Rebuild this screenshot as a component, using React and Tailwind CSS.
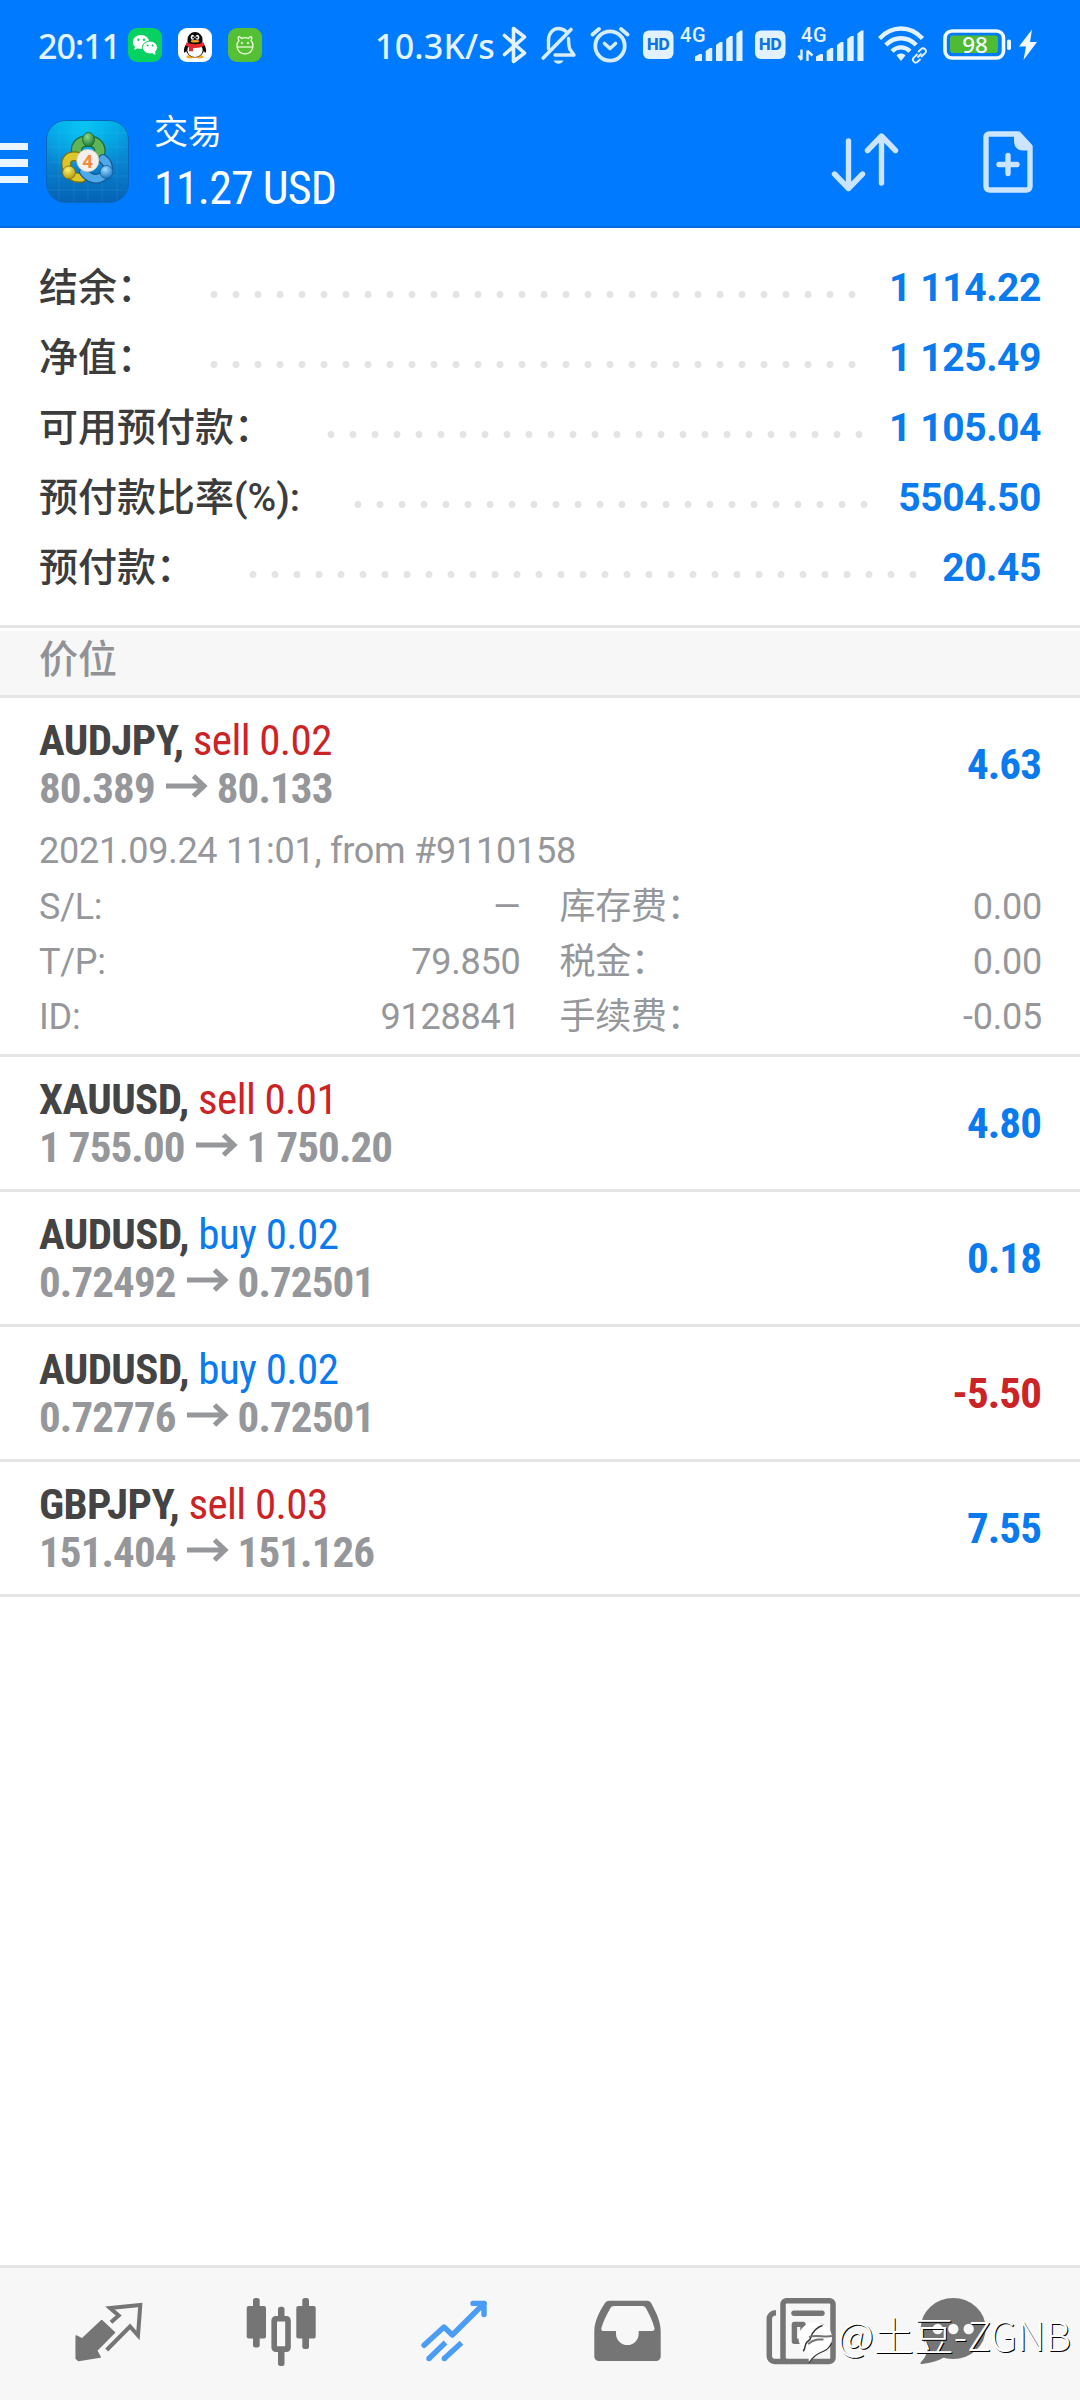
import React from "react";

const account = [
  { label: "结余：", value: "1 114.22", dots: 30 },
  { label: "净值：", value: "1 125.49", dots: 30 },
  { label: "可用预付款：", value: "1 105.04", dots: 25 },
  { label: "预付款比率(%):", value: "5504.50", dots: 24 },
  { label: "预付款：", value: "20.45", dots: 31 },
];

const positions = [
  {
    symbol: "AUDJPY",
    side: "sell",
    lots: "0.02",
    open: "80.389",
    current: "80.133",
    profit: "4.63",
    details: {
      time: "2021.09.24 11:01, from #9110158",
      rows: [
        ["S/L:", "–", "库存费：", "0.00"],
        ["T/P:", "79.850", "税金：", "0.00"],
        ["ID:", "9128841", "手续费：", "-0.05"],
      ],
    },
  },
  { symbol: "XAUUSD", side: "sell", lots: "0.01", open: "1 755.00", current: "1 750.20", profit: "4.80" },
  { symbol: "AUDUSD", side: "buy", lots: "0.02", open: "0.72492", current: "0.72501", profit: "0.18" },
  { symbol: "AUDUSD", side: "buy", lots: "0.02", open: "0.72776", current: "0.72501", profit: "-5.50" },
  { symbol: "GBPJPY", side: "sell", lots: "0.03", open: "151.404", current: "151.126", profit: "7.55" },
];

const WeChatIcon = () => (
  <svg width="34" height="34" viewBox="0 0 34 34">
    <rect width="34" height="34" rx="9" fill="#07d160" />
    <ellipse cx="13" cy="14" rx="8.2" ry="7" fill="#fff" />
    <path d="M7 18l-.8 4 4-2z" fill="#fff" />
    <ellipse cx="22" cy="19.500" rx="7.600" ry="6.500" fill="#fff" stroke="#07d160" strokeWidth="1" />
    <path d="M24 25l3.500 2-.4-3.800z" fill="#fff" />
    <circle cx="10.400" cy="11.800" r="1.200" fill="#07d160" />
    <circle cx="16" cy="11.800" r="1.200" fill="#07d160" />
    <circle cx="19.600" cy="17.600" r="1" fill="#07d160" />
    <circle cx="24.600" cy="17.600" r="1" fill="#07d160" />
  </svg>
);

const QQIcon = () => (
  <svg width="34" height="34" viewBox="0 0 34 34">
    <rect width="34" height="34" rx="9" fill="#fff" />
    <ellipse cx="12.500" cy="28.800" rx="4" ry="1.700" fill="#f5a623" />
    <ellipse cx="21.500" cy="28.800" rx="4" ry="1.700" fill="#f5a623" />
    <path d="M9 15C6.500 18 5.500 21 6 24.500c1 .5 2-1 2.600-2h16.800c.6 1 1.600 2.500 2.600 2 .5-3.500-.5-6.500-3-9.500z" fill="#0a0a0a" />
    <ellipse cx="17" cy="20.500" rx="9.200" ry="9" fill="#0a0a0a" />
    <ellipse cx="17" cy="22.300" rx="7.600" ry="6.800" fill="#fff" />
    <path d="M9.500 14V11.500a7.500 7.500 0 0 1 15 0V14l-3 3h-9z" fill="#0a0a0a" />
    <path d="M8.500 14.200c5 2.600 12 2.600 17 0l1 3.300c-4 2.300-7.500 2.700-11.500 2.400v3.300h-4v-4.200c-1.200-.4-2.200-.9-3-1.400z" fill="#e8262b" />
    <ellipse cx="14.600" cy="9.300" rx="1.900" ry="2.500" fill="#fff" />
    <ellipse cx="19.400" cy="9.300" rx="1.900" ry="2.500" fill="#fff" />
    <circle cx="15.200" cy="9.500" r="1" fill="#000" />
    <circle cx="18.900" cy="9.500" r="1" fill="#000" />
    <ellipse cx="17" cy="13.300" rx="4.300" ry="1.300" fill="#f5a623" />
  </svg>
);

const MonsterIcon = () => (
  <svg width="34" height="34" viewBox="0 0 34 34" fill="none" stroke="#e9ffd9" strokeWidth="1.300">
    <rect width="34" height="34" rx="9" fill="#55bf35" stroke="none" />
    <path d="M11 12.500c-1.500-2.500-.8-4 .6-3.700 1 .2 1.400 1 1.900 1.700 2-1 5-1 7 0 .5-.7.9-1.500 1.900-1.700 1.400-.3 2.100 1.200.6 3.700 2.600 3.200 2.300 7 .6 9.800-1.600 2.500-4 3.500-6.600 3.500s-5-1-6.600-3.500c-1.700-2.800-2-6.600.6-9.800z" />
    <path d="M9.200 19h15.600" />
    <path d="M14 13.800v2.400M20 13.800v2.400M12.800 15h2.400M18.800 15h2.400" strokeWidth="1" />
  </svg>
);

const BluetoothIcon = () => (
  <svg width="26" height="40" viewBox="0 0 26 40" fill="none" stroke="#e3f3ff" strokeWidth="3.600" strokeLinecap="round" strokeLinejoin="round">
    <path d="M2.500 10.500L22.500 28 11.500 36.500V3.500L22.500 12 2.500 29.500" />
  </svg>
);

const MutedBellIcon = () => (
  <svg width="36" height="40" viewBox="0 0 36 40" fill="none" stroke="#d6edff" strokeWidth="3.400" strokeLinecap="round" strokeLinejoin="round">
    <path d="M7.500 24V14.500C8 7.500 12.500 3.500 17.500 3.500c3 0 5.500 1 7.500 3" />
    <path d="M27.500 13.500c.3 5 .2 8 1.300 10.500L33 30H14" />
    <path d="M2.200 33L30 4.500" strokeWidth="3.600" />
    <path d="M12.500 35.500h10c-1.200 2.200-3 3.200-5 3.200s-3.800-1-5-3.200z" fill="#d6edff" stroke="none" />
  </svg>
);

const AlarmIcon = () => (
  <svg width="40" height="40" viewBox="0 0 40 40" fill="none" stroke="#d6edff" strokeWidth="3.800" strokeLinecap="round" strokeLinejoin="round">
    <circle cx="20" cy="21" r="14.700" />
    <path d="M2.500 9.500L9 4M37.500 9.500L31 4" />
    <path d="M14.500 18.500l5.500 5 5.500-5" strokeWidth="3.600" />
  </svg>
);

const HdIcon = () => (
  <svg width="31" height="30" viewBox="0 0 31 30">
    <rect y=".5" width="30.500" height="28.500" rx="6" fill="#e3f2ff" />
    <text x="15.300" y="20.300" textAnchor="middle" fontFamily="Inter, sans-serif" fontWeight="800" fontSize="15.500" fill="#0c74e4">
      HD
    </text>
  </svg>
);

const SignalIcon = ({ traffic }) => (
  <svg className="overflow-visible" width="66" height="38" viewBox="0 0 66 38" fill="#e3f2ff">
    <text x="3" y="15.500" fontFamily="Roboto, sans-serif" fontWeight="500" fontSize="20" letterSpacing="0.600">
      4G
    </text>
    <path d="M18 35v-4.500l4.500-2.500h2.500v7zM28.700 35V25l4-3h2.500v13zM39 35V19l4-3h2.500v19zM49.200 35V13l4-3h2.500v25zM59.400 35V7.500l4-3H65.500V35z" />
    {traffic && (
      <path d="M3.500 23.500v10M9.500 35V24.500M0.500 29.500l3 4.500M9.500 25l5 4.500" fill="none" stroke="#e3f2ff" strokeWidth="2.400" />
    )}
  </svg>
);

const WifiIcon = () => (
  <svg width="51" height="38" viewBox="0 0 51 38" fill="none" stroke="#e3f2ff" strokeWidth="4.400">
    <path d="M1.500 12.500C14-.8 32-.8 44.500 12.500" />
    <path d="M7.800 19c8.800-9 21.600-9 30.400 0" />
    <path d="M14 25.300c5.200-5.200 12.800-5.200 18 0" />
    <path d="M18.500 29.500c2.500-2.600 6.500-2.600 9 0L23 35z" fill="#e3f2ff" stroke="none" />
    <path d="M39.500 28l-3.700 3.700a2.800 2.800 0 0 0 4 4l2.700-2.700M43 31l4-3.800a2.800 2.800 0 0 0-4-4L40 26" strokeWidth="1.900" />
    <path d="M39.500 31.500l4-4" strokeWidth="1.900" />
  </svg>
);

const BatteryIcon = () => (
  <svg width="95" height="32" viewBox="0 0 95 32">
    <rect x="2" y="2" width="58.500" height="27" rx="7" fill="none" stroke="#f2faff" strokeWidth="3.600" />
    <rect x="7" y="6.500" width="48" height="17.500" rx="3" fill="#4dbb33" />
    <rect x="64" y="10.500" width="4" height="10.500" rx="1.800" fill="#f2faff" />
    <text x="32" y="23.600" textAnchor="middle" fontFamily="Noto Sans, sans-serif" fontWeight="500" fontSize="22.500" fill="#f2faff">
      98
    </text>
    <path d="M89 .5L76 17.500h7L80.500 31 94 13h-7z" fill="#f2faff" />
  </svg>
);

const AppLogo = () => (
  <svg width="83" height="83" viewBox="0 0 83 83">
    <defs>
      <linearGradient id="tile" x1="0" y1="0" x2="0" y2="1">
        <stop offset="0" stopColor="#00a4e4" />
        <stop offset="0.500" stopColor="#0a84d0" />
        <stop offset="1" stopColor="#0562b4" />
      </linearGradient>
      <radialGradient id="glow" cx="0.450" cy="0.050" r="0.600">
        <stop offset="0" stopColor="#08c4f4" />
        <stop offset="1" stopColor="#08c4f4" stopOpacity="0" />
      </radialGradient>
      <radialGradient id="green" cx="0.400" cy="0.300" r="0.700">
        <stop offset="0" stopColor="#8fd98a" />
        <stop offset="1" stopColor="#1d7a35" />
      </radialGradient>
      <radialGradient id="yellow" cx="0.400" cy="0.300" r="0.700">
        <stop offset="0" stopColor="#fff27a" />
        <stop offset="1" stopColor="#b39a08" />
      </radialGradient>
      <radialGradient id="azure" cx="0.400" cy="0.300" r="0.700">
        <stop offset="0" stopColor="#a5dcff" />
        <stop offset="1" stopColor="#1678c4" />
      </radialGradient>
    </defs>
    <rect x=".5" y=".5" width="82" height="82" rx="19" fill="url(#tile)" />
    <rect x=".5" y=".5" width="82" height="82" rx="19" fill="url(#glow)" stroke="#0a66bd" />
    <path d="M13 3v77M28 1v81M42 1v81M56 1v81M71 3v77M1 13h81M1 27h81M1 42h81M1 56h81M1 70h81" stroke="#4cc0f0" strokeOpacity="0.160" />
    <g fill="none" strokeLinecap="round">
      <path d="M32 35c-4-8 1-14 10-14s14 6 11 14" stroke="#1c6a36" strokeWidth="11.500" />
      <path d="M32 35c-4-8 1-14 10-14s14 6 11 14" stroke="#5fb457" strokeWidth="9" />
      <path d="M31 36.500c-8-1.500-12 3-10.500 10C22 54 28 59 36 57.500" stroke="#77700c" strokeWidth="10" />
      <path d="M31 36.500c-8-1.500-12 3-10.500 10C22 54 28 59 36 57.500" stroke="#dcc62c" strokeWidth="7.500" />
      <path d="M38 52c5 6.500 12 8.500 18 5S65 45 57 39" stroke="#145a96" strokeWidth="10" />
      <path d="M38 52c5 6.500 12 8.500 18 5S65 45 57 39" stroke="#4fa9e8" strokeWidth="7.500" />
    </g>
    <ellipse cx="42.500" cy="19.500" rx="6" ry="7" fill="url(#green)" stroke="#195f2c" strokeWidth=".8" />
    <circle cx="23" cy="52.500" r="6.500" fill="url(#yellow)" stroke="#776a0a" strokeWidth=".8" />
    <circle cx="60.500" cy="52" r="6.500" fill="url(#azure)" stroke="#0f5795" strokeWidth=".8" />
    <circle cx="41.800" cy="40.500" r="11.200" fill="#f3efec" stroke="#b9b5a8" strokeWidth=".6" />
    <text x="41.800" y="47.500" textAnchor="middle" fontFamily="Roboto, sans-serif" fontWeight="700" fontSize="19" fill="#f58a3c">
      4
    </text>
  </svg>
);

const SortIcon = () => (
  <svg width="70" height="60" viewBox="0 0 70 60" fill="none" stroke="#cbe4ff" strokeWidth="5.400" strokeLinecap="round" strokeLinejoin="round">
    <path d="M18.500 9v46M4.500 42l14 14.500 14-14.500" />
    <path d="M51.500 51V5M37.500 18.500l14-14.500 14 14.500" />
  </svg>
);

const NewOrderIcon = () => (
  <svg width="50" height="62" viewBox="0 0 50 62" fill="none" stroke="#cbe4ff">
    <path d="M6 3h29.500L47 15.500V55.500a3.500 3.500 0 0 1-3.500 3.500H6.500a3.500 3.500 0 0 1-3.500-3.500V6a3 3 0 0 1 3-3z" strokeWidth="5.400" strokeLinejoin="round" />
    <path d="M31 3v7c0 5.500 3 9.500 9 9.500h8v-5L37 3z" fill="#cbe4ff" stroke="none" />
    <path d="M25 24.500v18M16 33.500h18" strokeWidth="5.400" strokeLinecap="round" />
  </svg>
);

const QuotesTab = () => (
  <svg width="72" height="72" viewBox="0 0 72 72">
    <path d="M29.700 24.500L42.500 36.500 24.700 54.500 28.200 61 6.500 64.500 4.200 62.500 4.200 40 10 43z" fill="#757575" stroke="#757575" strokeWidth="1.500" strokeLinejoin="round" />
    <path d="M39 26.300L46.700 19.500 38 12 68.300 9 66 39.500 58 30.500 34.700 54" fill="none" stroke="#757575" strokeWidth="4" />
  </svg>
);

const ChartTab = () => (
  <svg width="72" height="72" viewBox="0 0 72 72" fill="#757575">
    <rect x="1.700" y="10" width="19.300" height="32.500" rx="2" />
    <rect x="8" y="2" width="6.700" height="49.500" rx="2.500" />
    <rect x="33" y="10.700" width="6.500" height="59.300" rx="2.500" />
    <rect x="29.200" y="22.800" width="13.800" height="30.300" rx="1.500" fill="#f7f7f7" stroke="#757575" strokeWidth="5.600" />
    <rect x="51.300" y="10" width="19.400" height="32.500" rx="2" />
    <rect x="57.300" y="2" width="6.700" height="51" rx="2.500" />
  </svg>
);

const TradeTab = () => (
  <svg width="72" height="72" viewBox="0 0 72 72" fill="none" stroke="#4a9cf5" strokeWidth="5.400" strokeLinejoin="round">
    <path d="M6 49.300L26 31 34.300 39 66 7.500" strokeLinecap="round" />
    <path d="M55 7.400H66V18.500" strokeLinecap="round" />
    <path d="M11 62.500L27.500 46.500M26.300 62.500L43.500 46.800" />
    <path d="M11 62.500h.1M26.300 62.500h.1" strokeLinecap="round" />
  </svg>
);

const HistoryTab = () => (
  <svg width="72" height="72" viewBox="0 0 72 72" fill="#757575">
    <path
      fillRule="evenodd"
      d="M17 4.700H55a5 5 0 0 1 4.500 3C64.500 17 68.700 26 68.700 35V60.500a4.500 4.500 0 0 1-4.500 4.500H6.800a4.500 4.500 0 0 1-4.500-4.500V35C2.300 26 7 16 12.500 7.700A5.500 5.500 0 0 1 17 4.700zM22 10a4 4 0 0 0-3.700 2.300C14.500 19 11.500 25 9.500 31.500c-.6 2.300 0 3.500 1.800 3.500H24v2.500a11.300 11.500 0 0 0 22.700 0V35H60c2 0 3-1.200 2.300-3.500C60.500 25 57.500 18.500 54 12.300A4 4 0 0 0 50.500 10z"
    />
  </svg>
);

const NewsTab = () => (
  <svg width="72" height="72" viewBox="0 0 72 72" fill="none" stroke="#757575">
    <rect x="18" y="4.700" width="50" height="60.700" rx="3.500" strokeWidth="5.500" />
    <path d="M11 16.800C6.500 17 4.300 19.500 4.300 23V60a5.300 5.300 0 0 0 5.300 5.400H22" strokeWidth="5.500" />
    <path d="M29 17.300H57" strokeWidth="5.400" strokeLinecap="round" />
    <rect x="29.400" y="28.400" width="8.600" height="16.900" strokeWidth="5.400" strokeLinejoin="round" />
    <path d="M49 30.500h8M49 44h8" strokeWidth="5.400" strokeLinecap="round" />
  </svg>
);

const ChatTab = () => (
  <svg width="72" height="72" viewBox="0 0 72 72" fill="#757575">
    <ellipse cx="36.200" cy="32.500" rx="32.500" ry="30.500" />
    <path d="M10 48c2 6-1 13-6.300 18.500-.6 1 0 1.800 1.300 1.500C14 67 22 65 28 60.500z" />
    <circle cx="20.700" cy="33" r="5.200" fill="#f7f7f7" />
    <circle cx="36.300" cy="33" r="5.200" fill="#f7f7f7" />
    <circle cx="51.700" cy="33" r="5.200" fill="#f7f7f7" />
  </svg>
);

const WatermarkLogo = () => (
  <svg width="38" height="44" viewBox="0 0 38 44" fill="none">
    <path d="M18 1.500C8.500 1.500 1.500 8 1.500 17c0 6 3.500 11 9.500 13.500L12 42c4-6.500 9-9.500 15-12 5-2 8-7.500 8-13.500C35 8 27.500 1.500 18 1.500z" fill="#fff" />
    <path d="M6 30c2-.5 1.500-4 3-7.500s4-2 5-6.500c1-5 7-10.500 11.500-11.500" stroke="#333" strokeWidth="1.500" />
    <path d="M12 16c7-2.500 15 .5 23-1M11 23c3-2.500 6-4 9.500-4.500h6" stroke="#757575" strokeWidth="2" />
    <path d="M12 42c3.500-6.500 8.500-9.500 15-12 3-1.200 6-4.500 7.500-8" stroke="#333" strokeWidth="1.200" />
  </svg>
);

const StatusBar = () => (
  <div className="flex h-[90px] items-center pl-[38px] font-['Noto_Sans',sans-serif] text-[34px] leading-none font-medium text-[#e3f3ff]">
    <span className="w-[90px] pt-[1px] tracking-[-1px]">20:11</span>
    <WeChatIcon />
    <span className="ml-4"><QQIcon /></span>
    <span className="ml-4"><MonsterIcon /></span>
    <span className="ml-[113px] w-[127px] pt-[1px] tracking-[0.2px]">10.3K/s</span>
    <BluetoothIcon />
    <span className="ml-[13px]"><MutedBellIcon /></span>
    <span className="ml-[13px]"><AlarmIcon /></span>
    <span className="ml-[13px]"><HdIcon /></span>
    <span className="ml-[3px]"><SignalIcon /></span>
    <span className="ml-[12px]"><HdIcon /></span>
    <span className="ml-[12px]"><SignalIcon traffic /></span>
    <span className="ml-[14px]"><WifiIcon /></span>
    <span className="ml-[14px]"><BatteryIcon /></span>
  </div>
);

const Header = () => (
  <header className="h-[228px] border-b-2 border-[#006ce0] bg-[#007aff]">
    <StatusBar />
    <div className="flex h-[136px] items-center pt-2 text-white">
      <div className="flex w-7 flex-col gap-[9px] pt-[2px]">
        <span className="h-[7.500px] bg-[#eaf6ff]" />
        <span className="h-[7.500px] bg-[#eaf6ff]" />
        <span className="h-[7.500px] bg-[#eaf6ff]" />
      </div>
      <div className="ml-[18px] pb-[1px]"><AppLogo /></div>
      <div className="ml-[25px] flex flex-col gap-1">
        <span className="text-[34px] leading-[48px]">交易</span>
        <span className="font-['Roboto_Condensed','Roboto',sans-serif] text-[46px] leading-[56px] tracking-[-0.8px]">11.27 USD</span>
      </div>
      <div className="mr-[47px] ml-auto flex items-center gap-[83px]">
        <SortIcon />
        <NewOrderIcon />
      </div>
    </div>
  </header>
);

const Account = () => (
  <section className="px-[39px] pt-[25px] pb-[22px] text-[39px] leading-[70px]">
    {account.map((item) => (
      <div key={item.label} className="flex h-[70px] items-start">
        <span className="font-medium text-[#3c3c3c]">{item.label}</span>
        <span
          className="mt-[38px] ml-[47px] h-[7px] bg-[radial-gradient(circle_at_center,#e4e4e4_3.2px,transparent_3.8px)] bg-[length:22px_7px]"
          style={{ width: item.dots * 22 }}
        />
        <span className="ml-auto font-bold tracking-[-0.4px] text-[#0a7aef]">{item.value}</span>
      </div>
    ))}
  </section>
);

const PriceArrow = () => (
  <svg className="mr-[9px] ml-[11px] inline-block align-[4px]" width="42" height="26" viewBox="0 0 42 26" fill="none" stroke="#96979b" strokeWidth="5">
    <path d="M0 13h38M27.500 3L38 13 27.500 23" />
  </svg>
);

const Position = ({ position }) => {
  const { symbol, side, lots, open, current, profit, details } = position;
  return (
    <article className="border-b-3 border-[#e5e5e5] px-[39px] pt-[18px]">
      <div className={details ? "flex items-center justify-between" : "flex items-center justify-between pb-[18px]"}>
        <div className="font-['Roboto_Condensed','Roboto',sans-serif] text-[43px] leading-[48px]">
          <div className="h-12 tracking-[-0.6px]">
            <span className="font-bold text-[#444444]">{symbol}, </span>
            <span className={side === "sell" ? "text-[#cb2326]" : "text-[#0a7aef]"}>
              {side} {lots}
            </span>
          </div>
          <div className="h-12 font-bold tracking-[-0.9px] text-[#96979b]">
            {open}
            <PriceArrow />
            {current}
          </div>
        </div>
        <span
          className={
            profit.startsWith("-")
              ? "font-['Roboto_Condensed','Roboto',sans-serif] text-[43px] leading-[48px] font-bold tracking-[-0.9px] text-[#cb2326]"
              : "font-['Roboto_Condensed','Roboto',sans-serif] text-[43px] leading-[48px] font-bold tracking-[-0.9px] text-[#0a7aef]"
          }
        >
          {profit}
        </span>
      </div>
      {details && (
        <div className="mt-[11px] pb-[9px] text-[36px] tracking-[-0.25px] text-[#96979b]">
          <div className="leading-[57px]">{details.time}</div>
          {details.rows.map(([name, value, feeName, fee]) => (
            <div key={name} className="grid grid-cols-2 gap-x-[39px] leading-[55px]">
              <div className="flex justify-between">
                <span>{name}</span>
                <span className={value === "–" ? "origin-right translate-x-[2px] scale-x-130" : ""}>{value}</span>
              </div>
              <div className="flex justify-between">
                <span>{feeName}</span>
                <span className="-mr-[1px]">{fee}</span>
              </div>
            </div>
          ))}
        </div>
      )}
    </article>
  );
};

const TabBar = () => (
  <nav className="relative flex h-[135px] items-start border-t-3 border-[#e5e5e5] bg-[#f7f7f7] pt-[28px] pl-[72px]">
    <QuotesTab />
    <span className="ml-[101px]"><ChartTab /></span>
    <span className="ml-[101px]"><TradeTab /></span>
    <span className="ml-[102px]"><HistoryTab /></span>
    <span className="ml-[101px]"><NewsTab /></span>
    <span className="ml-[80px]"><ChatTab /></span>
    <div className="absolute top-[53px] right-[9px] flex items-start gap-[2px]">
      <WatermarkLogo />
      <span className="-mt-[7px] font-['Noto_Sans_CJK_SC',sans-serif] text-[40px] leading-[40px] font-light whitespace-nowrap text-white [text-shadow:1px_1px_0px_#000]">
        @土豆-ZGNB
      </span>
    </div>
  </nav>
);

const App = () => {
  return (
    <div className="flex h-[2400px] w-[1080px] flex-col overflow-hidden bg-white font-['Roboto','Noto_Sans_CJK_SC',sans-serif]">
      <Header />
      <main className="flex-1">
        <Account />
        <div className="border-y-3 border-[#e5e5e5]">
          <h2 className="mt-[3px] h-[64px] bg-[#f7f7f7] px-[39px] text-[39px] leading-[59px] font-medium text-[#919296]">价位</h2>
        </div>
        {positions.map((position, i) => (
          <Position key={i} position={position} />
        ))}
      </main>
      <TabBar />
    </div>
  );
};

export default App;
